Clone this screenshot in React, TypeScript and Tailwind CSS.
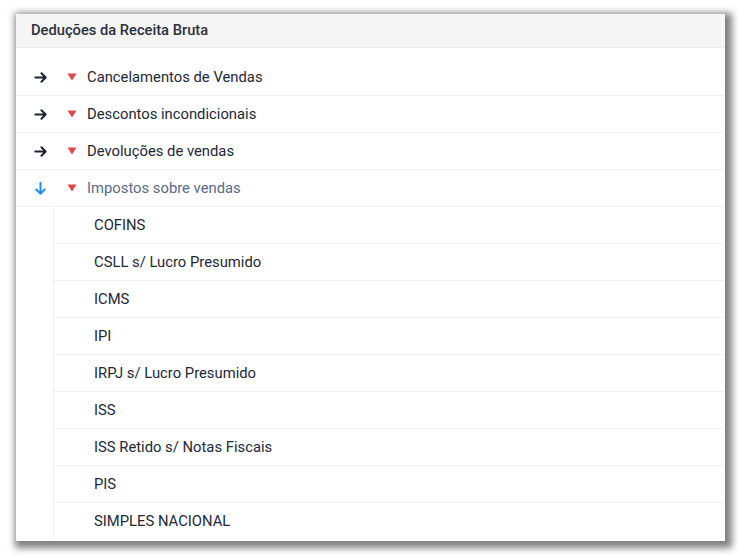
import React from 'react';

const groups = [
    { label: 'Cancelamentos de Vendas', open: false },
    { label: 'Descontos incondicionais', open: false },
    { label: 'Devoluções de vendas', open: false },
    { label: 'Impostos sobre vendas', open: true },
];

const taxes = [
    'COFINS',
    'CSLL s/ Lucro Presumido',
    'ICMS',
    'IPI',
    'IRPJ s/ Lucro Presumido',
    'ISS',
    'ISS Retido s/ Notas Fiscais',
    'PIS',
    'SIMPLES NACIONAL',
];

function ArrowRight() {
    return (
        <svg width="15" height="15" viewBox="0 0 16 16" fill="none" stroke="#1c2436" strokeWidth="2.2" strokeLinecap="round" strokeLinejoin="round">
            <path d="M2.5 8h11M9 3.5 13.5 8 9 12.5" />
        </svg>
    );
}

function ArrowDown() {
    return (
        <svg width="15" height="15" viewBox="0 0 16 16" fill="none" stroke="#2590f2" strokeWidth="2.2" strokeLinecap="round" strokeLinejoin="round">
            <path d="M8 2v11.5M3.5 9 8 13.5 12.5 9" />
        </svg>
    );
}

function Caret() {
    return (
        <svg width="10" height="8" viewBox="0 0 10 8">
            <path d="M0.5 0.5h9L5 7.5z" fill="#e04848" />
        </svg>
    );
}

export default function App() {
    return (
        <div className="w-[738px] h-[556px] bg-white pt-[14px] pl-4" style={{ fontFamily: 'Roboto, "Liberation Sans", sans-serif' }}>
            <div className="w-[709px] h-[527px] bg-white overflow-hidden shadow-[3px_3px_7px_4px_rgba(0,0,0,0.5)]">
                <div className="h-[34px] bg-[#f5f5f5] border-b border-[#ebebeb] flex items-center pl-[15px] text-[14.7px] font-medium text-[#2b3040]">
                    Deduções da Receita Bruta
                </div>
                <div className="pt-[11px]">
                    {groups.map((g) => (
                        <div key={g.label}>
                            <div className="h-[37px] flex items-center border-b border-[#f0f0f0]">
                                <div className="ml-[17px] flex">
                                    {g.open ? <ArrowDown /> : <ArrowRight />}
                                </div>
                                <div className="ml-[19px] flex">
                                    <Caret />
                                </div>
                                <span className={`ml-[10px] text-[14.8px] ${g.open ? 'text-[#5a6a88]' : 'text-[#232838]'}`}>{g.label}</span>
                            </div>
                            {g.open && (
                                <div className="ml-[37px] border-l border-[#f0f0f0]">
                                    {taxes.map((t, i) => (
                                        <div
                                            key={t}
                                            className={`h-[37px] flex items-center pl-[40px] text-[14.8px] text-[#232838] ${i < taxes.length - 1 ? 'border-b border-[#f0f0f0]' : ''}`}
                                        >
                                            {t}
                                        </div>
                                    ))}
                                </div>
                            )}
                        </div>
                    ))}
                </div>
            </div>
        </div>
    );
}
